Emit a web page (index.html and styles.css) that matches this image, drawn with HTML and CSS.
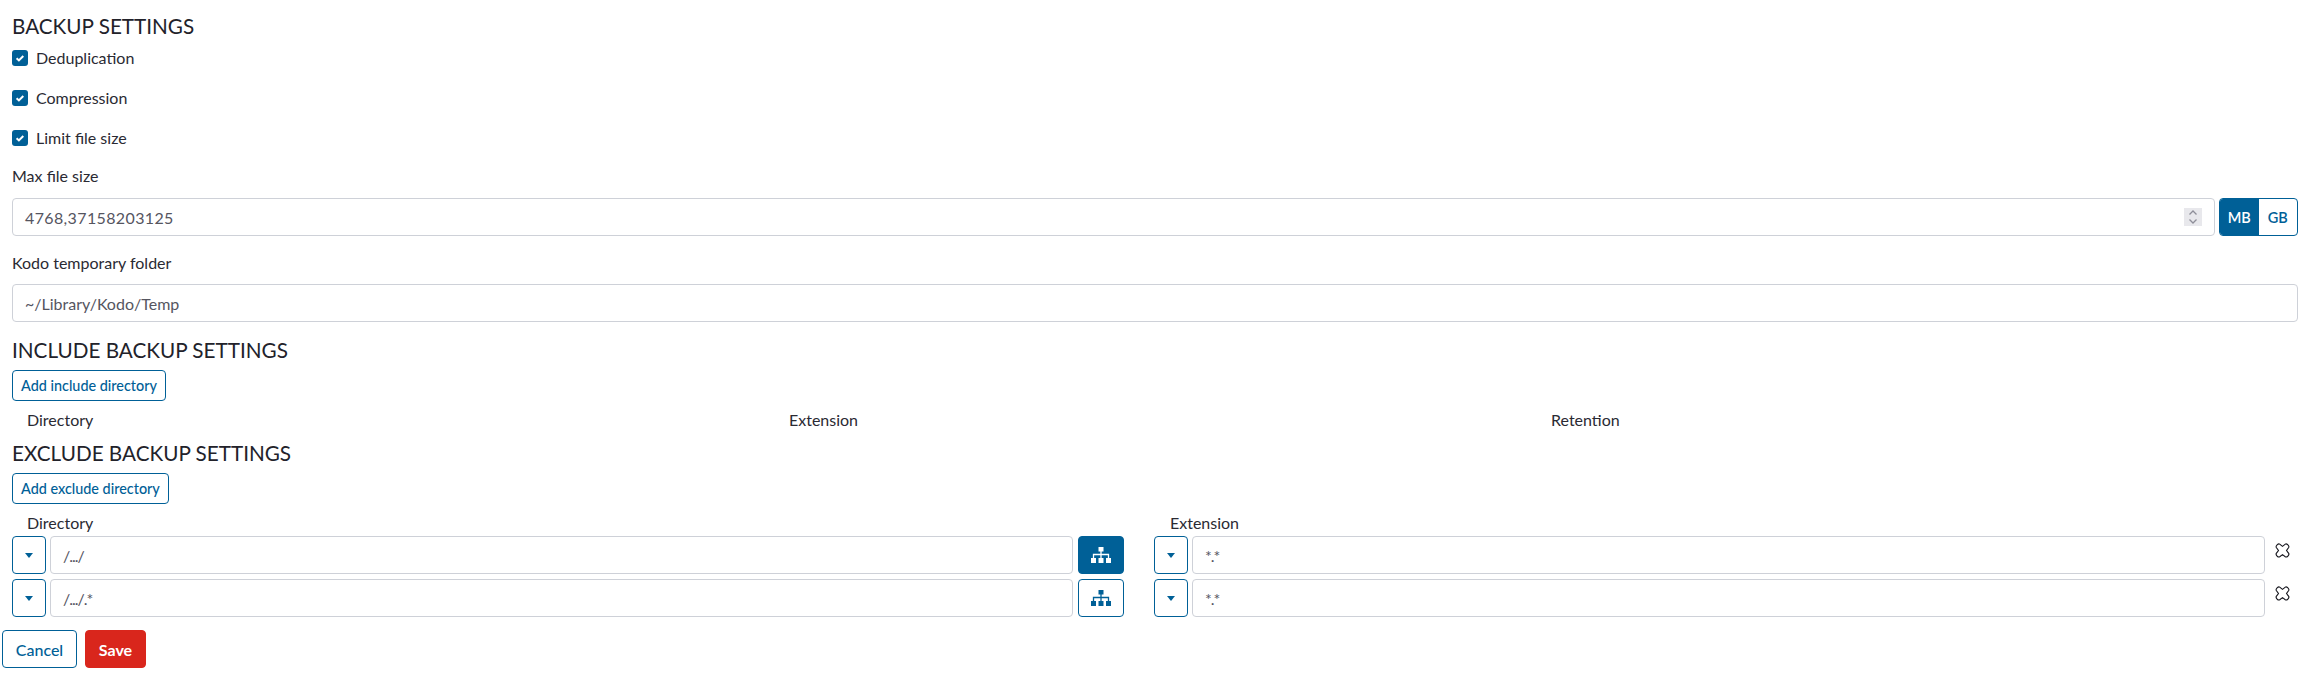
FILE: index.html
```html
<!DOCTYPE html>
<html lang="en">
<head>
<meta charset="utf-8">
<title>Backup settings</title>
<link rel="stylesheet" href="styles.css">
</head>
<body>
<main class="page">
  <h2 class="heading first">BACKUP SETTINGS</h2>
  <label class="check"><span class="box"><svg viewBox="0 0 16 16"><path d="M4.600 8.200l2.300 2.200 4.400-4.400" /></svg></span>Deduplication</label>
  <label class="check"><span class="box"><svg viewBox="0 0 16 16"><path d="M4.600 8.200l2.300 2.200 4.400-4.400" /></svg></span>Compression</label>
  <label class="check"><span class="box"><svg viewBox="0 0 16 16"><path d="M4.600 8.200l2.300 2.200 4.400-4.400" /></svg></span>Limit file size</label>

  <div class="label">Max file size</div>
  <div class="size-row">
    <div class="field grow"><span class="num">4768,37158203125</span>
      <span class="spin"><svg viewBox="0 0 18 18"><path d="M5.500 6.500L9 3l3.500 3.500M5.500 11.500L9 15l3.500-3.500"/></svg></span>
    </div>
    <div class="units"><span class="unit on">MB</span><span class="unit">GB</span></div>
  </div>

  <div class="label second">Kodo temporary folder</div>
  <div class="field">~/Library/Kodo/Temp</div>

  <h2 class="heading include">INCLUDE BACKUP SETTINGS</h2>
  <button class="btn add">Add include directory</button>
  <div class="cols"><span>Directory</span><span>Extension</span><span>Retention</span></div>

  <h2 class="heading exclude">EXCLUDE BACKUP SETTINGS</h2>
  <button class="btn add">Add exclude directory</button>

  <div class="ex-head"><span class="ex-dir">Directory</span><span>Extension</span></div>
  <div class="ex-row">
    <button class="btn caret"><i></i></button>
    <div class="field dir"><span class="path">/.../</span></div>
    <button class="btn tree on"><svg viewBox="0 0 20 16"><path class="fill" d="M7.500 0h5v4.500h-5zM0 11h5v5H0zM7.500 11h5v5h-5zM15 11h5v5h-5z"/><path class="line" d="M10 4v3.500M2.500 11V7.500h15V11M10 7.500V11"/></svg></button>
    <button class="btn caret gap"><i></i></button>
    <div class="field ext"><span class="path">*.*</span></div>
    <button class="del" aria-label="Delete"><svg viewBox="0 0 16 16"><path d="M5 1.200L8 3.600l3-2.400c1.500-1 4.600 2 3.600 3.600L12.300 8l2.300 3c1 1.700-2 4.800-3.600 3.700L8 12.400l-3 2.300C3.400 15.800.4 12.700 1.400 11L3.700 8 1.400 4.800C.4 3.200 3.500.2 5 1.200z"/></svg></button>
  </div>
  <div class="ex-row">
    <button class="btn caret"><i></i></button>
    <div class="field dir"><span class="path">/.../.*</span></div>
    <button class="btn tree"><svg viewBox="0 0 20 16"><path class="fill" d="M7.500 0h5v4.500h-5zM0 11h5v5H0zM7.500 11h5v5h-5zM15 11h5v5h-5z"/><path class="line" d="M10 4v3.500M2.500 11V7.500h15V11M10 7.500V11"/></svg></button>
    <button class="btn caret gap"><i></i></button>
    <div class="field ext"><span class="path">*.*</span></div>
    <button class="del" aria-label="Delete"><svg viewBox="0 0 16 16"><path d="M5 1.200L8 3.600l3-2.400c1.500-1 4.600 2 3.600 3.600L12.300 8l2.300 3c1 1.700-2 4.800-3.600 3.700L8 12.400l-3 2.300C3.400 15.800.4 12.700 1.400 11L3.700 8 1.400 4.800C.4 3.200 3.500.2 5 1.200z"/></svg></button>
  </div>

  <div class="actions">
    <button class="btn cancel">Cancel</button>
    <button class="btn save">Save</button>
  </div>
</main>
</body>
</html>
```
FILE: styles.css
```css
* { box-sizing: border-box; }
html, body { margin: 0; padding: 0; background: #fff; }
body {
  font-family: "Lato", "Open Sans", sans-serif;
  font-size: 16px;
  color: #2a2a33;
  height: 682px;
  overflow: hidden;
}
.page { padding: 0 11px 0 12px; }
.heading {
  margin: 0;
  font-size: 20.700px;
  font-weight: 400;
  line-height: 24px;
  color: #22222a;
}
.heading.first { padding-top: 14px; height: 39px; }
.heading.include { margin-top: 16px; }
.heading.exclude { margin-top: 9px; }
.check {
  display: flex;
  align-items: center;
  height: 24px;
  margin: 8px 0 16px;
  line-height: 24px;
}
.check:first-of-type { margin-top: 7px; }
.box {
  width: 16px;
  height: 16px;
  margin-right: 8px;
  background: #006097;
  border-radius: 3px;
  display: block;
}
.box svg { display: block; width: 16px; height: 16px; fill: none; stroke: #fff; stroke-width: 2; }
.label { line-height: 24px; height: 24px; margin: -2px 0 10px; }
.label.second { margin-top: 15px; margin-bottom: 9px; }
.size-row { display: flex; gap: 4px; }
.grow { flex: 1; }
.field {
  display: flex;
  align-items: center;
  justify-content: space-between;
  height: 38px;
  padding: 0 12px;
  border: 1px solid #ced1d8;
  border-radius: 4px;
  color: #55555f;
  background: #fff;
}
.num { letter-spacing: 0.370px; }
.path { letter-spacing: -1px; }
.spin { width: 18px; height: 18px; background: #e8e8ec; display: block; }
.spin svg { display: block; width: 18px; height: 18px; fill: none; stroke: #8e8e99; stroke-width: 1.300; }
.units {
  display: flex;
  width: 79px;
  border: 1px solid #006097;
  border-radius: 4px;
  overflow: hidden;
}
.unit {
  flex: 1;
  display: flex;
  align-items: center;
  justify-content: center;
  color: #006097;
  font-weight: 600;
  font-size: 14.500px;
}
.unit.on { background: #006097; color: #fff; }
.btn {
  font: inherit;
  color: #006097;
  background: #fff;
  border: 1px solid #006097;
  border-radius: 4px;
  padding: 0;
  cursor: pointer;
}
.add {
  display: block;
  height: 31px;
  margin-top: 8px;
  padding: 0 8px;
  font-size: 14.400px;
  font-weight: 500;
}
.cols { display: grid; grid-template-columns: 762px 762px 1fr; padding-left: 15px; line-height: 24px; margin-top: 7px; }
.ex-head { display: flex; line-height: 24px; margin-top: 7px; padding-left: 15px; height: 25px; }
.ex-dir { width: 1143px; }
.ex-row { display: flex; align-items: stretch; height: 38px; margin-bottom: 5px; }
.caret { width: 34px; display: flex; align-items: center; justify-content: center; flex: none; }
.caret i { display: block; width: 0; height: 0; border: 4px solid transparent; border-top: 5px solid #006097; border-bottom: 0; }
.caret.gap { margin-left: 30px; }
.dir { width: 1023px; margin: 0 5px 0 4px; flex: none; }
.ext { width: 1073px; margin: 0 10px 0 4px; flex: none; }
.tree { width: 46px; flex: none; display: flex; align-items: center; justify-content: center; }
.tree svg { width: 20px; height: 16px; display: block; }
.tree .fill { fill: #006097; }
.tree .line { fill: none; stroke: #006097; stroke-width: 1.300; }
.tree.on { background: #006097; }
.tree.on .fill { fill: #fff; }
.tree.on .line { stroke: #fff; }
.del { background: none; border: 0; padding: 0; width: 15px; height: 15px; margin-top: 7px; flex: none; }
.del svg { display: block; width: 15px; height: 15px; fill: none; stroke: #15151c; stroke-width: 1.200; }
.actions { display: flex; gap: 8px; margin: 13px 0 0 -10px; }
.cancel, .save { height: 38px; font-weight: 500; padding: 0 12px; }
.cancel { width: 75px; }
.save { width: 61px; background: #d9261c; border-color: #d9261c; color: #fff; font-weight: 700; }
```
